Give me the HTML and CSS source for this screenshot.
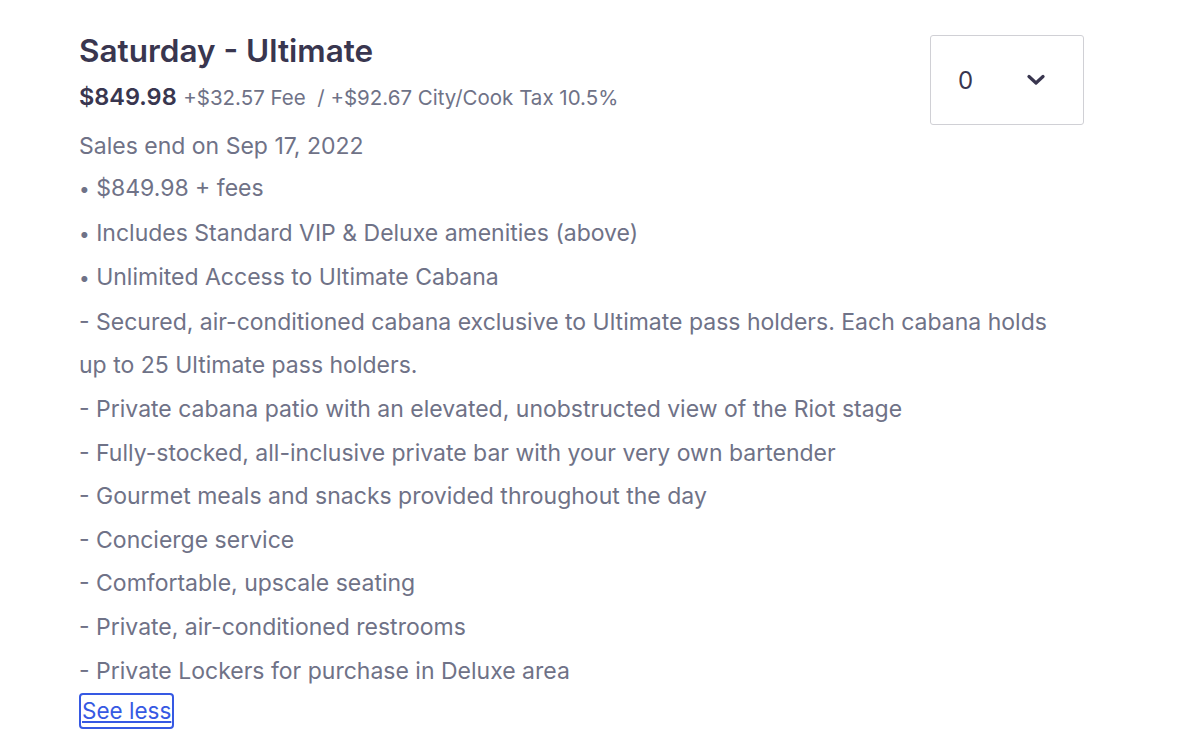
FILE: index.html
```html
<!DOCTYPE html>
<html>
<head>
<meta charset="utf-8">
<link rel="stylesheet" href="styles.css">
</head>
<body>
<div class="ticket">
  <div class="head">
    <div class="info">
      <h2 class="title">Saturday - Ultimate</h2>
      <div class="price-row"><span class="price">$849.98</span> <span class="fees">+$32.57 Fee &nbsp;/ +$92.67 City/Cook Tax 10.5%</span></div>
    </div>
    <div class="qty">
      <span class="qty-val">0</span>
      <svg class="chev" width="18" height="12" viewBox="0 0 18 12"><path d="M2 2.5 L9 9 L16 2.5" fill="none" stroke="#39364f" stroke-width="3.2" stroke-linecap="round" stroke-linejoin="round"/></svg>
    </div>
  </div>
  <p class="sales-end">Sales end on Sep 17, 2022</p>
  <div class="desc">
    <p><span class="bullet">•</span> $849.98 + fees</p>
    <p><span class="bullet">•</span> Includes Standard VIP &amp; Deluxe amenities (above)</p>
    <p><span class="bullet">•</span> Unlimited Access to Ultimate Cabana</p>
    <p>- Secured, air-conditioned cabana exclusive to Ultimate pass holders. Each cabana holds up to 25 Ultimate pass holders.</p>
    <p>- Private cabana patio with an elevated, unobstructed view of the Riot stage</p>
    <p>- Fully-stocked, all-inclusive private bar with your very own bartender</p>
    <p>- Gourmet meals and snacks provided throughout the day</p>
    <p>- Concierge service</p>
    <p>- Comfortable, upscale seating</p>
    <p>- Private, air-conditioned restrooms</p>
    <p>- Private Lockers for purchase in Deluxe area</p>
  </div>
  <a class="see-less" href="#">See less</a>
</div>
</body>
</html>
```
FILE: styles.css
```css
html, body { margin: 0; padding: 0; background: #fff; }
body { font-family: Inter, "Noto Sans", sans-serif; color: #6f7287; }
.ticket { padding: 36px 116px 0 79px; width: 1005px; }
.head { display: flex; justify-content: space-between; align-items: flex-start; height: 89px; }
.title { margin: 0; font-size: 31.5px; font-weight: 600; color: #39364f; line-height: 30px; }
.price-row { margin-top: 16px; line-height: 30px; white-space: nowrap; }
.price { font-size: 23.5px; font-weight: 600; color: #39364f; }
.fees { font-size: 20.5px; color: #6f7287; margin-left: 2px; }
.sales-end { margin: 0; font-size: 23px; line-height: 42px; }
.desc { font-size: 23px; line-height: 43.6px; width: 1000px; }
.desc p { margin: 0; }
.bullet { font-size: 19px; }
.see-less { display: inline-block; color: #3659e3; font-size: 22.5px; line-height: 32px; padding: 0 1px; border: 2px solid #3659e3; border-radius: 4px; text-decoration: underline; }
.qty { flex: none; width: 154px; height: 90px; box-sizing: border-box; margin-top: -1px; border: 1px solid #d0d0d5; border-radius: 3px; display: flex; align-items: center; justify-content: space-between; padding: 0 38px 0 27px; }
.qty-val { font-size: 24px; color: #39364f; }
```
